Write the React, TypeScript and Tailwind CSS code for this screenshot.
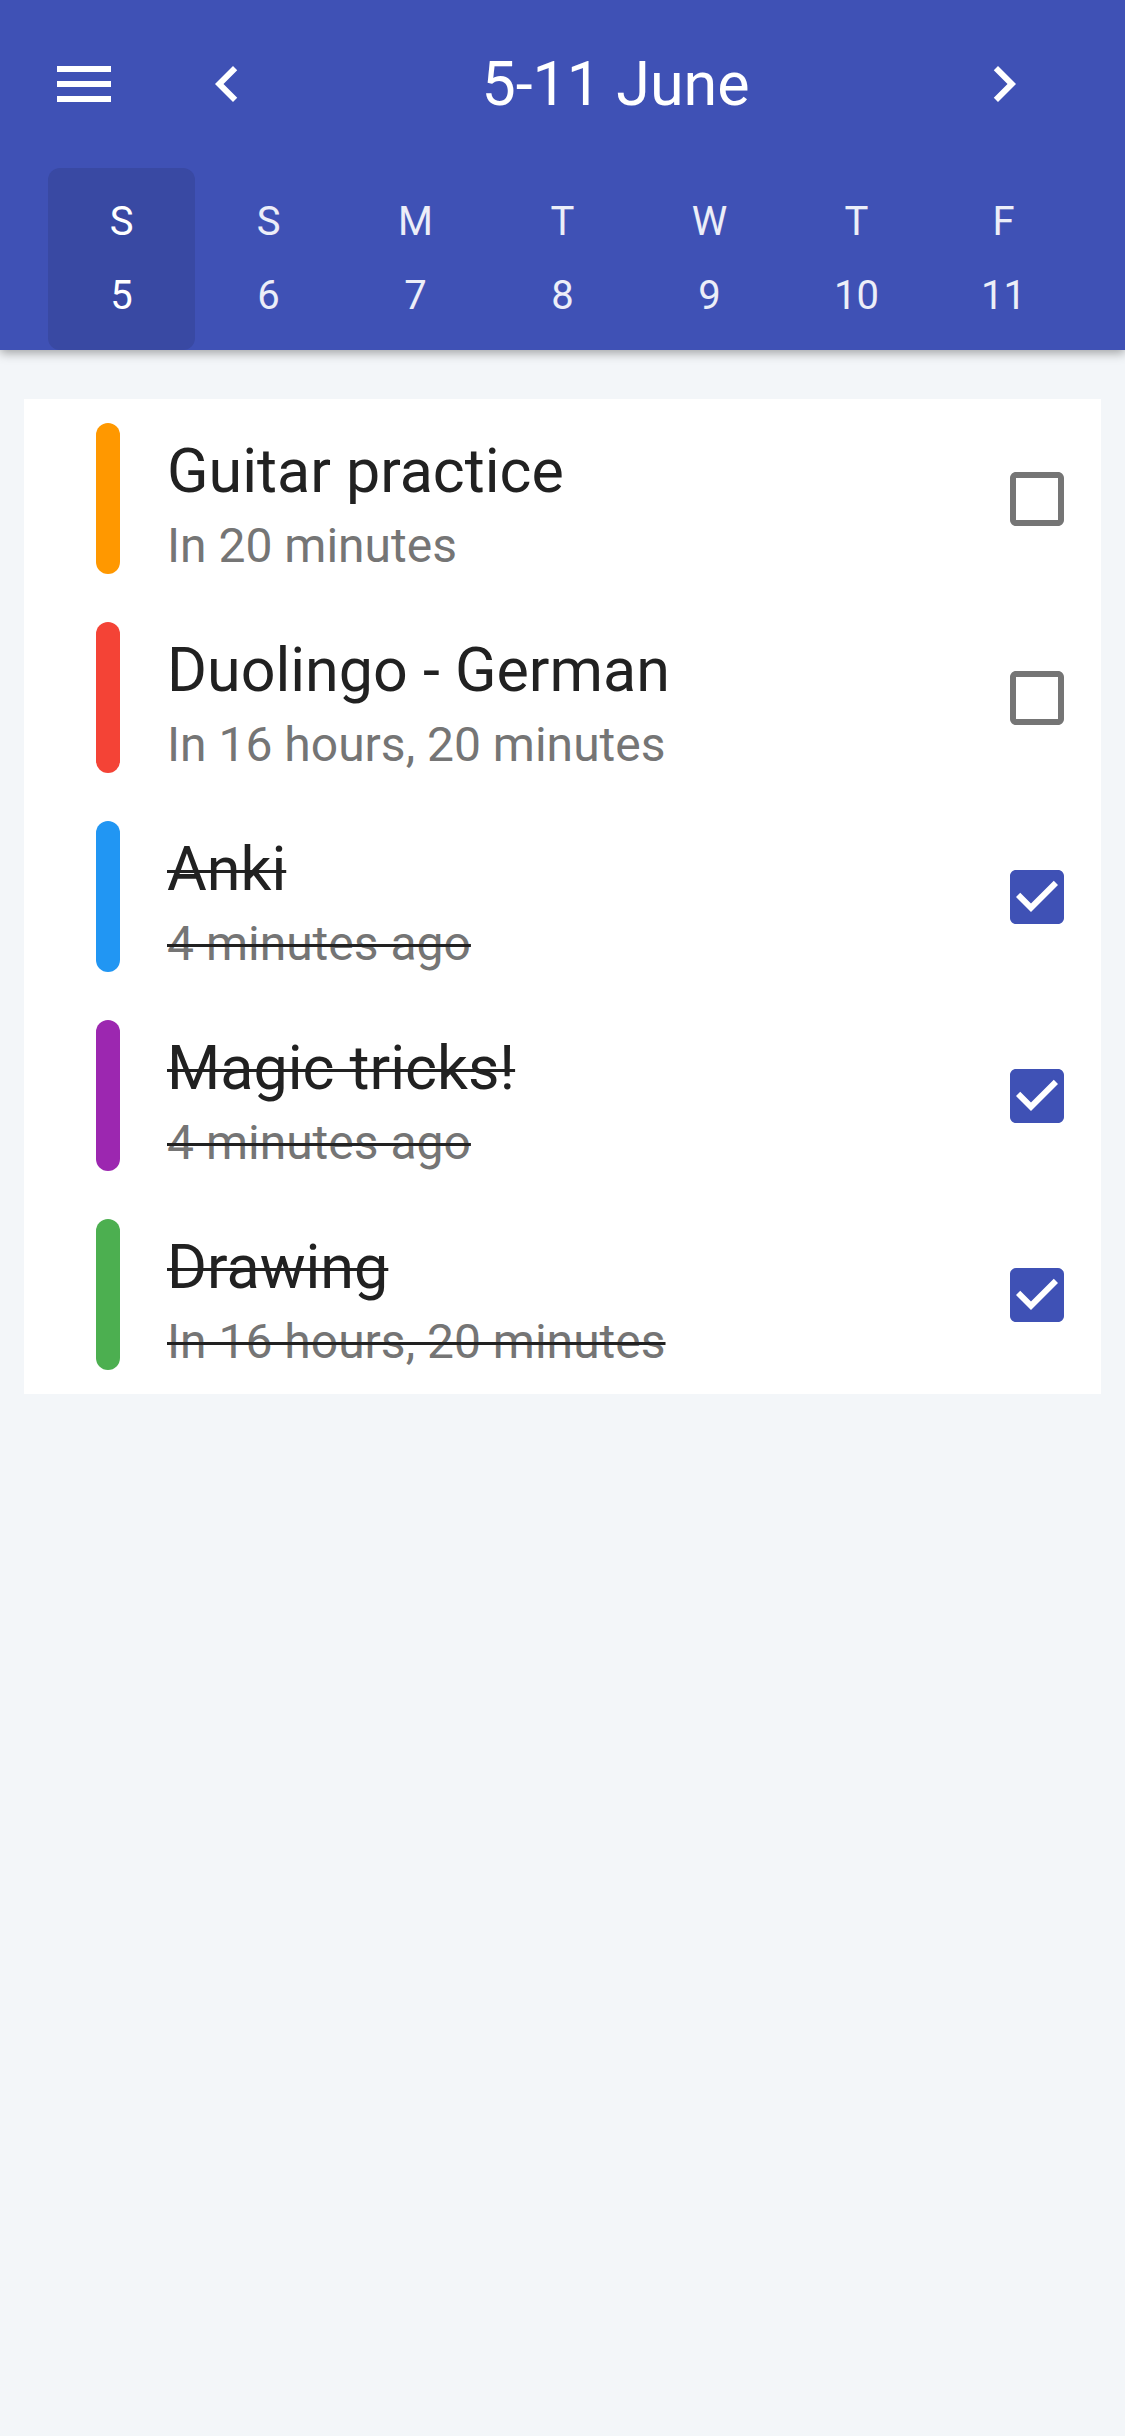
import { FC } from 'react';

type Task = {
  title: string;
  when: string;
  color: string;
  done: boolean;
};

const tasks: Task[] = [
  { title: 'Guitar practice', when: 'In 20 minutes', color: 'bg-[#FF9800]', done: false },
  { title: 'Duolingo - German', when: 'In 16 hours, 20 minutes', color: 'bg-[#F44336]', done: false },
  { title: 'Anki', when: '4 minutes ago', color: 'bg-[#2196F3]', done: true },
  { title: 'Magic tricks!', when: '4 minutes ago', color: 'bg-[#9C27B0]', done: true },
  { title: 'Drawing', when: 'In 16 hours, 20 minutes', color: 'bg-[#4CAF50]', done: true },
];

const days = [
  { letter: 'S', num: 5 },
  { letter: 'S', num: 6 },
  { letter: 'M', num: 7 },
  { letter: 'T', num: 8 },
  { letter: 'W', num: 9 },
  { letter: 'T', num: 10 },
  { letter: 'F', num: 11 },
];

const Icon: FC<{ d: string; className?: string }> = ({ d, className }) => (
  <svg viewBox="0 0 24 24" className={className} fill="currentColor">
    <path d={d} />
  </svg>
);

const MENU = 'M3 18h18v-2H3v2zm0-5h18v-2H3v2zm0-7v2h18V6H3z';
const LEFT = 'M15.41 7.41L14 6l-6 6 6 6 1.41-1.41L10.83 12z';
const RIGHT = 'M10 6L8.59 7.41 13.17 12l-4.58 4.59L10 18l6-6z';
const BOX_EMPTY =
  'M19 5v14H5V5h14m0-2H5c-1.1 0-2 .9-2 2v14c0 1.1.9 2 2 2h14c1.1 0 2-.9 2-2V5c0-1.1-.9-2-2-2z';
const BOX_CHECKED =
  'M19 3H5c-1.11 0-2 .9-2 2v14c0 1.1.89 2 2 2h14c1.11 0 2-.9 2-2V5c0-1.1-.89-2-2-2zm-9 14l-5-5 1.41-1.41L10 14.17l7.59-7.59L19 8l-9 9z';

const TaskRow: FC<{ task: Task }> = ({ task }) => {
  const strike = task.done ? 'line-through decoration-[#212121] decoration-[3px]' : '';
  return (
    <div className="flex items-center h-[199px] pl-[72px] pr-[28px]">
      <div className={`w-6 h-[151px] rounded-full ${task.color}`} />
      <div className="flex-1 self-start mt-[36px] ml-[47px] flex flex-col">
        <span className={`text-[61px] leading-[72px] text-[#212121] ${strike}`}>{task.title}</span>
        <span className={`mt-[10px] text-[48px] leading-[58px] text-[#757575] ${strike}`}>{task.when}</span>
      </div>
      {task.done ? (
        <Icon d={BOX_CHECKED} className="w-[72px] h-[72px] text-[#3F51B5]" />
      ) : (
        <Icon d={BOX_EMPTY} className="w-[72px] h-[72px] text-[#757575]" />
      )}
    </div>
  );
};

const App: FC = () => {
  return (
    <div className="min-h-[2436px] bg-[#F3F6F9] font-['Roboto',sans-serif]">
      <header className="relative z-10 bg-[#3F51B5] text-white shadow-[0_3px_10px_rgba(0,0,0,0.35)]">
        <div className="flex items-center h-[72px] pl-12 pr-[85px] box-content pt-12">
          <Icon d={MENU} className="w-[72px] h-[72px]" />
          <Icon d={LEFT} className="ml-[71px] w-[72px] h-[72px]" />
          <h1 className="flex-1 text-center text-[61px] leading-[72px] font-normal">5-11 June</h1>
          <Icon d={RIGHT} className="w-[72px] h-[72px]" />
        </div>
        <div className="grid grid-cols-7 px-12 mt-12">
          {days.map((day, i) => (
            <div
              key={i}
              className={`flex flex-col items-center pt-[30px] pb-[31px] rounded-xl ${
                i === 0 ? 'bg-[#3949A3] text-white' : 'text-white/90'
              }`}
            >
              <span className="text-[40px] leading-[47px]">{day.letter}</span>
              <span className="mt-[27px] text-[40px] leading-[47px]">{day.num}</span>
            </div>
          ))}
        </div>
      </header>
      <main className="mx-6 mt-[49px] bg-white">
        {tasks.map((t) => (
          <TaskRow key={t.title} task={t} />
        ))}
      </main>
    </div>
  );
};

export default App;
